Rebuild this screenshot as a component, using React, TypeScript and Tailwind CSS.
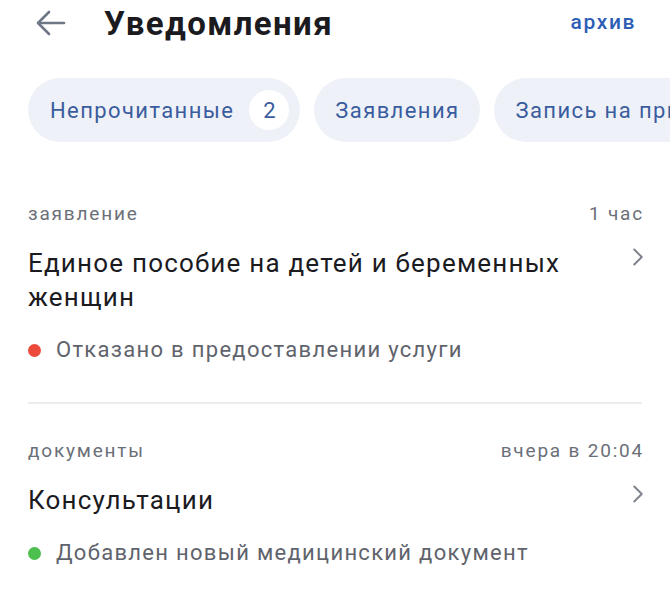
import { ChevronRight } from 'lucide-react'

type Notice = {
    kind: string
    time: string
    title: string
    status: string
    dot: string
}

const notices: Notice[] = [
    {
        kind: 'заявление',
        time: '1 час',
        title: 'Единое пособие на детей и беременных женщин',
        status: 'Отказано в предоставлении услуги',
        dot: 'bg-[#ec4b3c]',
    },
    {
        kind: 'документы',
        time: 'вчера в 20:04',
        title: 'Консультации',
        status: 'Добавлен новый медицинский документ',
        dot: 'bg-[#4cbf4f]',
    },
]

function BackArrow() {
    return (
        <svg width="30" height="26" viewBox="0 0 30 26" fill="none" stroke="#6f7686" strokeWidth="2.6" strokeLinecap="round" strokeLinejoin="round">
            <path d="M28 13H3" />
            <path d="M13 2L2 13l11 11" />
        </svg>
    )
}

function NoticeItem({ notice }: { notice: Notice }) {
    return (
        <div className="pt-[35px] pb-[38px]">
            <div className="flex items-center justify-between text-[19px] leading-[24px] tracking-[1.8px] text-[#6b6f78]">
                <span>{notice.kind}</span>
                <span className="-mr-[2px]">{notice.time}</span>
            </div>
            <div className="mt-[20px] flex items-start justify-between gap-6">
                <p className="text-[26px] leading-[34px] tracking-[1.2px] text-[#1b1b1f]">{notice.title}</p>
                <ChevronRight className="-mr-[11px] -mt-[4px] h-[30px] w-[30px] shrink-0 text-[#80848c]" strokeWidth={1.6} />
            </div>
            <div className="mt-[22px] flex items-center gap-[15px]">
                <span className={`h-[13px] w-[13px] shrink-0 rounded-full ${notice.dot}`} />
                <span className="text-[22px] leading-[28px] tracking-[1.3px] text-[#5f636c]">{notice.status}</span>
            </div>
        </div>
    )
}

export default function App() {
    return (
        <div className="h-[600px] w-[670px] overflow-hidden bg-white font-['Roboto',sans-serif]">
            <header className="flex h-[46px] items-center px-[36px]">
                <BackArrow />
                <h1 className="ml-[38px] text-[33px] font-bold leading-none tracking-[1.4px] text-[#1b1b1f]">Уведомления</h1>
                <a className="ml-auto -mr-[2px] text-[21px] font-medium tracking-[1.6px] text-[#2d5eb5]">архив</a>
            </header>

            <div className="mt-[32px] flex gap-[14px] overflow-hidden whitespace-nowrap pl-[28px] text-[22px] tracking-[1.4px] text-[#3b5c9e]">
                <div className="flex h-[64px] shrink-0 items-center rounded-full bg-[#eef2f8] pl-[22px] pr-[11px]">
                    Непрочитанные
                    <span className="ml-[15px] flex h-[40px] w-[40px] items-center justify-center rounded-full bg-white tracking-normal">2</span>
                </div>
                <div className="flex h-[64px] shrink-0 items-center rounded-full bg-[#eef2f8] px-[21px]">
                    Заявления
                </div>
                <div className="flex h-[64px] shrink-0 items-center rounded-full bg-[#eef2f8] px-[21px]">
                    Запись на приём
                </div>
            </div>

            <div className="mx-[28px] mt-[25px]">
                <NoticeItem notice={notices[0]} />
                <div className="h-[2px] bg-[#ececee]" />
                <NoticeItem notice={notices[1]} />
            </div>
        </div>
    )
}
